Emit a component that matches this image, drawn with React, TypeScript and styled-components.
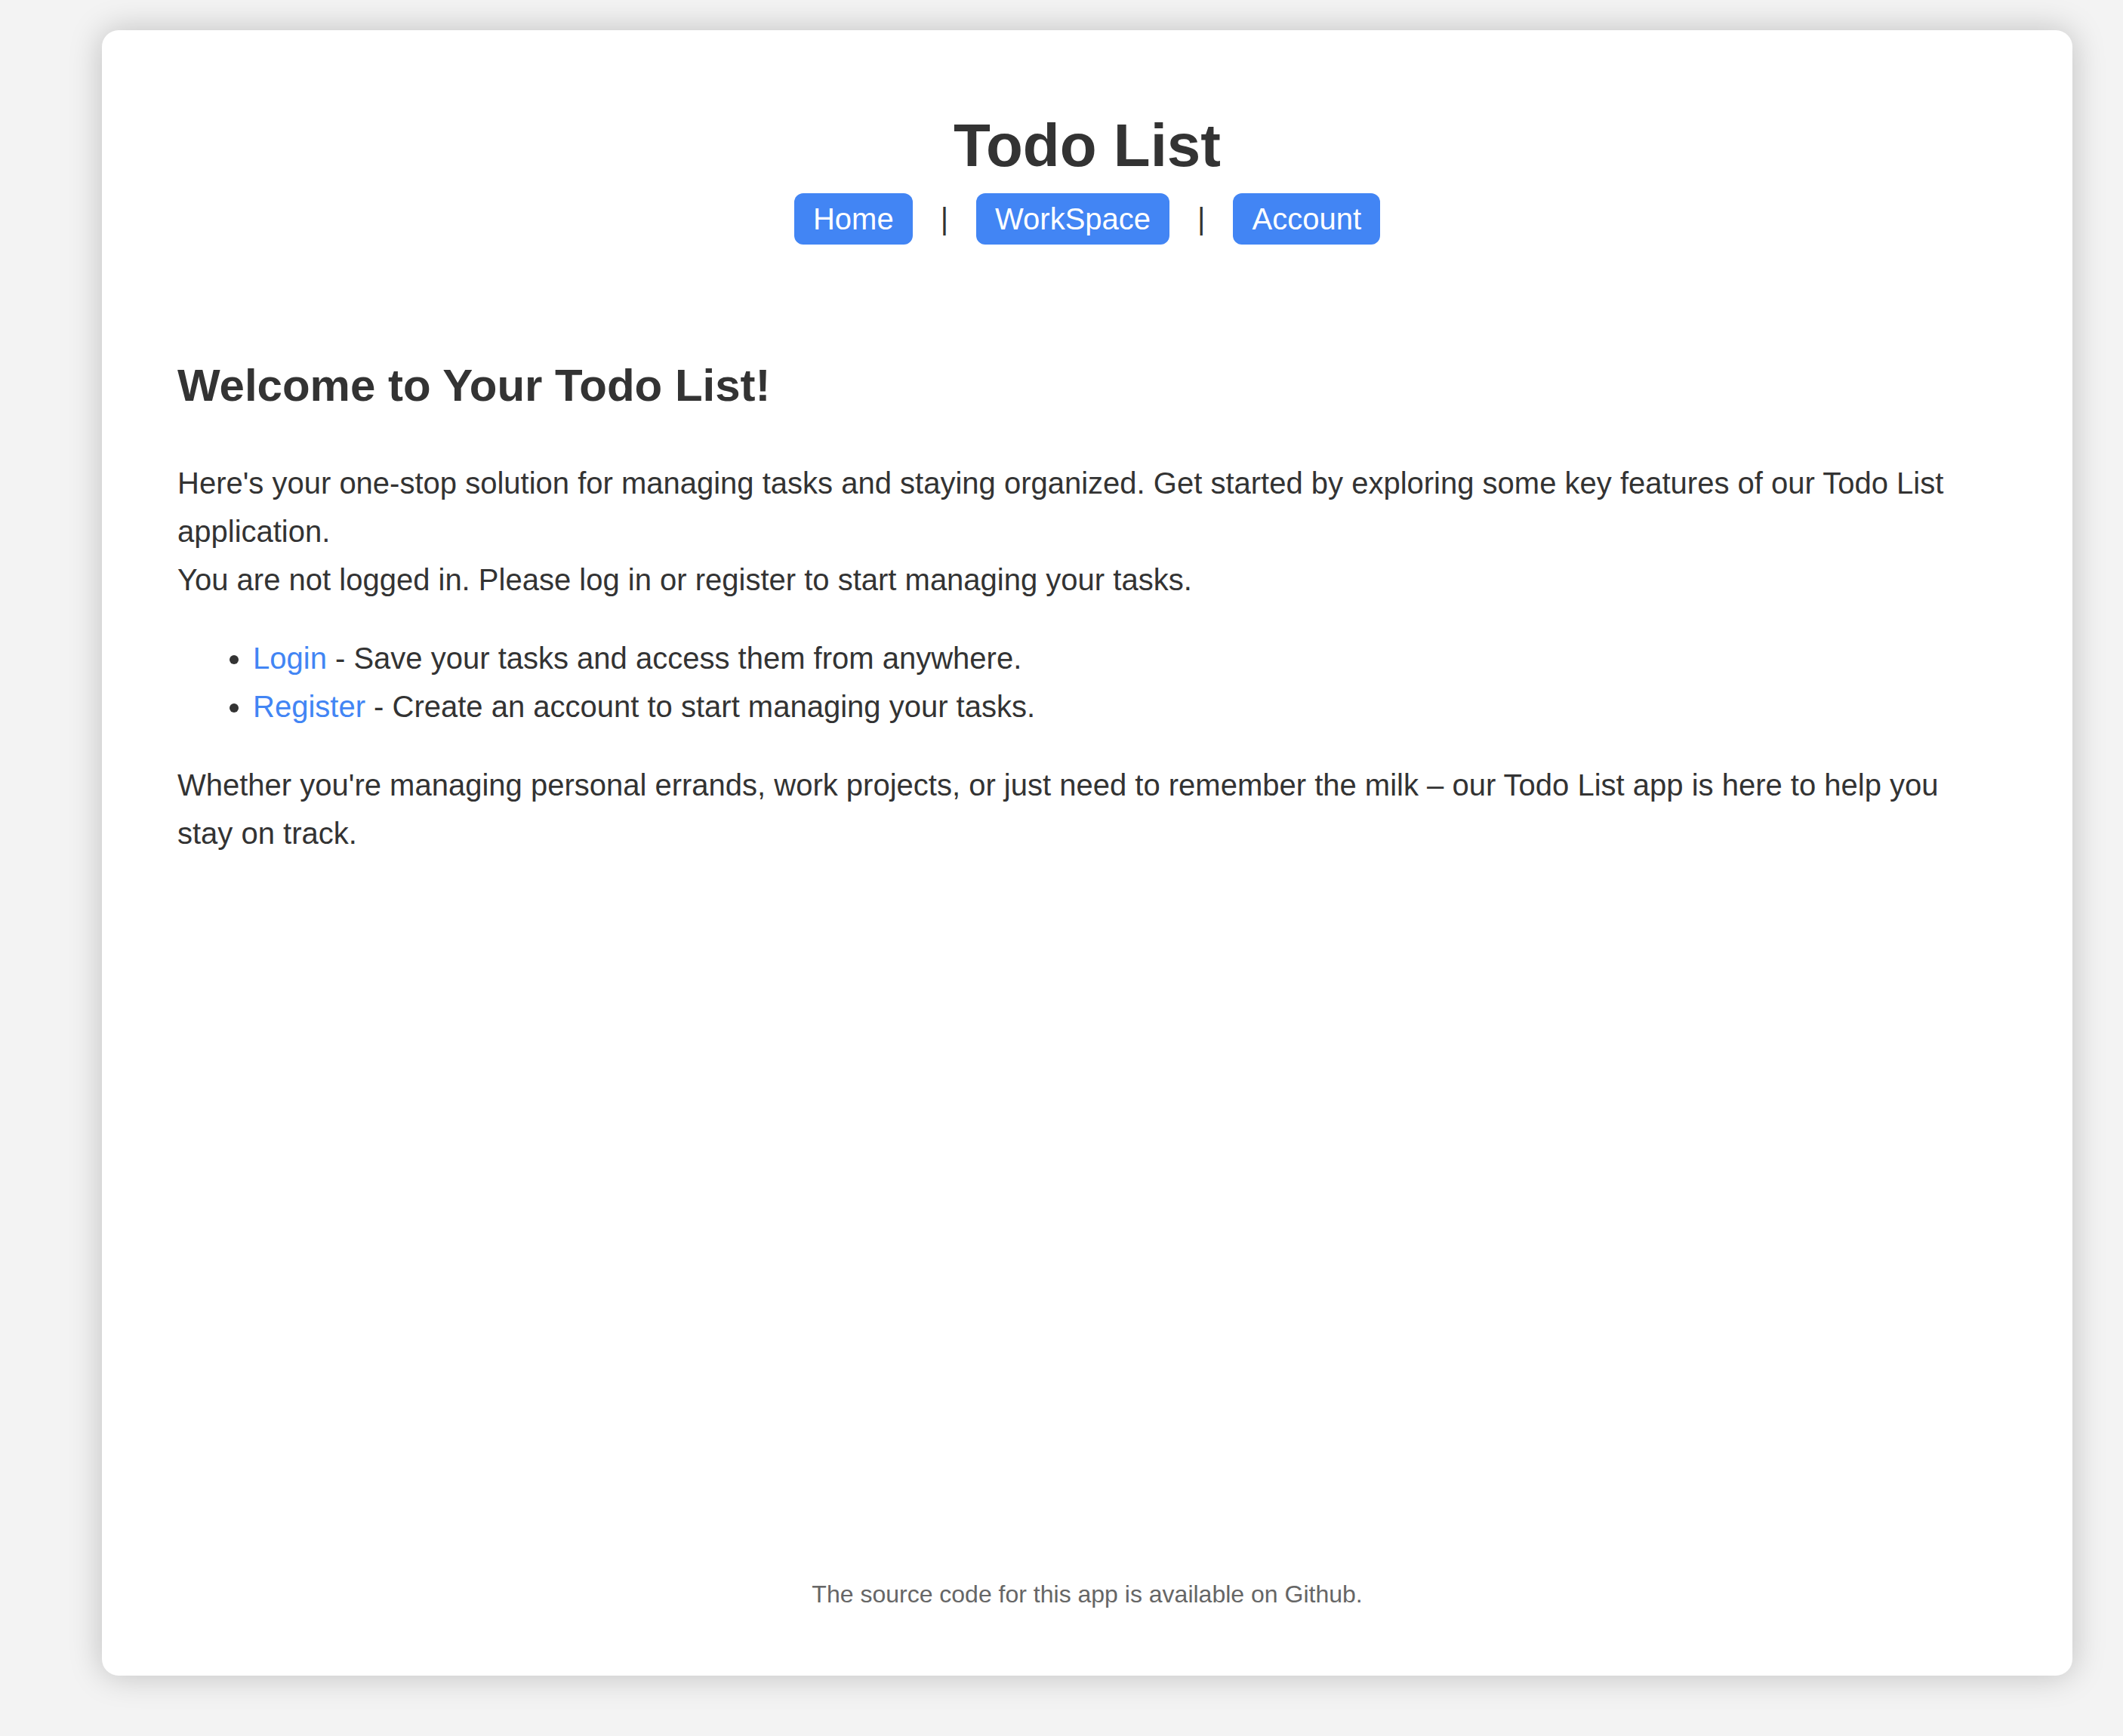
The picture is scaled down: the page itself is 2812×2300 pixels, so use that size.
import React from "react";
import styled, { createGlobalStyle } from "styled-components";

const GlobalStyle = createGlobalStyle`
  html, body {
    margin: 0;
    padding: 0;
    background: #f3f3f3;
  }
  body {
    font-family: "Liberation Sans", Arial, Helvetica, sans-serif;
    color: #333;
  }
`;

const Card = styled.div`
  box-sizing: border-box;
  display: flex;
  flex-direction: column;
  width: 2610px;
  min-height: 2180px;
  margin: 40px 0 80px 135px;
  padding: 0 100px;
  background: #fff;
  border-radius: 22px;
  box-shadow: 0 0 44px rgba(0, 0, 0, 0.22);
`;

const Header = styled.header`
  padding-top: 107px;
  text-align: center;
`;

const Title = styled.h1`
  margin: 0;
  font-size: 80px;
  line-height: 92px;
  font-weight: bold;
  color: #333;
`;

const Nav = styled.nav`
  display: flex;
  justify-content: center;
  align-items: center;
  gap: 37px;
  margin-top: 17px;
`;

const NavButton = styled.a`
  display: inline-block;
  padding: 2px 25px;
  font-size: 40px;
  line-height: 64px;
  color: #fff;
  background: #4285f4;
  border-radius: 12px;
  text-decoration: none;
  cursor: pointer;
`;

const Pipe = styled.span`
  font-size: 40px;
  line-height: 64px;
  color: #333;
`;

const Main = styled.main`
  flex: 1;
  padding-top: 139px;
`;

const Heading = styled.h2`
  margin: 0 0 49px;
  font-size: 60px;
  line-height: 96px;
  font-weight: bold;
  color: #333;
`;

const Text = styled.p`
  margin: 0 0 40px;
  font-size: 40px;
  line-height: 64px;
`;

const List = styled.ul`
  margin: 0 0 40px;
  padding-left: 100px;
  font-size: 40px;
  line-height: 64px;
`;

const Link = styled.a`
  color: #4285f4;
  text-decoration: none;
`;

const Footer = styled.footer`
  padding-bottom: 82px;
  text-align: center;
  font-size: 32px;
  line-height: 51px;
  color: #666;
`;

export default function App() {
  const links = ["Home", "WorkSpace", "Account"];

  return (
    <>
      <GlobalStyle />
      <Card>
        <Header>
          <Title>Todo List</Title>
          <Nav>
            {links.map((label, i) => (
              <React.Fragment key={label}>
                {i > 0 && <Pipe>|</Pipe>}
                <NavButton>{label}</NavButton>
              </React.Fragment>
            ))}
          </Nav>
        </Header>

        <Main>
          <Heading>Welcome to Your Todo List!</Heading>
          <Text>
            Here's your one-stop solution for managing tasks and staying organized. Get started by
            exploring some key features of our Todo List application.
            <br />
            You are not logged in. Please log in or register to start managing your tasks.
          </Text>
          <List>
            <li>
              <Link>Login</Link> - Save your tasks and access them from anywhere.
            </li>
            <li>
              <Link>Register</Link> - Create an account to start managing your tasks.
            </li>
          </List>
          <Text>
            Whether you're managing personal errands, work projects, or just need to remember the
            milk – our Todo List app is here to help you stay on track.
          </Text>
        </Main>

        <Footer>The source code for this app is available on Github.</Footer>
      </Card>
    </>
  );
}
